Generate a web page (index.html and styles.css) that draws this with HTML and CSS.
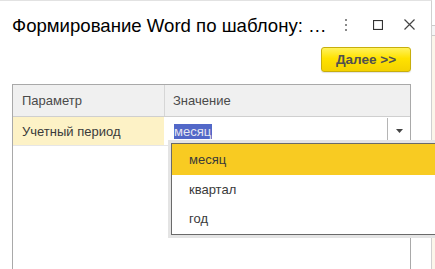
FILE: index.html
```html
<!DOCTYPE html>
<html>
<head>
<meta charset="utf-8">
<link rel="stylesheet" href="styles.css">
</head>
<body>
<div class="screen">
  <div class="window">
    <div class="titlebar">
      <div class="title">Формирование Word по шаблону: …</div>
      <div class="controls">
        <svg class="ic-more" width="4" height="12" viewBox="0 0 4 12"><rect x="1" y="0" width="2" height="2" fill="#8a8a8a"/><rect x="1" y="5" width="2" height="2" fill="#8a8a8a"/><rect x="1" y="10" width="2" height="2" fill="#8a8a8a"/></svg>
        <svg class="ic-max" width="10" height="10" viewBox="0 0 10 10"><rect x="0.5" y="0.5" width="9" height="9" fill="none" stroke="#333" stroke-width="1.2"/></svg>
        <svg class="ic-close" width="11" height="11" viewBox="0 0 11 11"><path d="M0.5 0.5 L10.5 10.5 M10.5 0.5 L0.5 10.5" stroke="#444" stroke-width="1.2"/></svg>
      </div>
    </div>
    <div class="toolbar">
      <button class="btn-next">Далее &gt;&gt;</button>
    </div>
    <div class="grid">
      <div class="row head">
        <div class="cell c1">Параметр</div>
        <div class="cell c2">Значение</div>
      </div>
      <div class="row data">
        <div class="cell c1 param">Учетный период</div>
        <div class="cell c2 value">
          <span class="sel">месяц</span>
          <span class="dd-btn"><svg width="7" height="4" viewBox="0 0 7 4"><path d="M0 0 H7 L3.5 4 Z" fill="#444"/></svg></span>
        </div>
      </div>
      <div class="rest"></div>
    </div>
  </div>
  <div class="outside"></div>
  <div class="popup">
    <div class="item active">месяц</div>
    <div class="item">квартал</div>
    <div class="item">год</div>
  </div>
</div>
</body>
</html>
```

FILE: styles.css
```css
html, body {
  margin: 0;
  padding: 0;
  background: #fff;
}
.screen {
  position: relative;
  width: 435px;
  height: 269px;
  overflow: hidden;
  display: flex;
  font-family: Arial, "Liberation Sans", sans-serif;
}
.window {
  width: 432px;
  height: 269px;
  box-sizing: border-box;
  border-top: 1px solid #e2e2e2;
  border-right: 1px solid #d0d0d0;
  display: flex;
  flex-direction: column;
  padding: 0 20px 0 12px;
}
.outside {
  flex: 1;
  background: linear-gradient(#fff 0, #fff 25px, #ccc 25px, #ccc 26px, #f6f6f6 26px, #f6f6f6 35px, #ccc 35px, #ccc 36px, #fbf6ea 36px);
}
.titlebar {
  height: 44px;
  display: flex;
  align-items: center;
}
.title {
  flex: 1;
  font-size: 18.6px;
  color: #000;
  white-space: nowrap;
  padding-top: 5px;
}
.controls {
  display: flex;
  align-items: center;
  margin-right: -4px;
  padding-top: 3px;
}
.ic-more { margin-right: 25px; }
.ic-max { margin-right: 21px; }
.toolbar {
  display: flex;
  justify-content: flex-end;
  height: 27px;
  padding-top: 2px;
}
.btn-next {
  width: 90px;
  height: 25px;
  border: 1px solid #c7ae0c;
  border-radius: 3px;
  background: linear-gradient(#fff25c 0%, #ffe200 45%, #f4d200 100%);
  font-family: Arial, "Liberation Sans", sans-serif;
  font-weight: bold;
  font-size: 13.5px;
  color: #505050;
  padding: 0;
  box-shadow: 0 1px 1px rgba(0,0,0,0.12);
}
.grid {
  margin-top: 10px;
  flex: 1;
  display: flex;
  flex-direction: column;
  border: 1px solid #a9a9a9;
  border-bottom: none;
}
.row {
  display: flex;
}
.cell {
  font-size: 13px;
  color: #4a4a4a;
  box-sizing: border-box;
  display: flex;
  align-items: center;
}
.head {
  height: 31px;
  background: #f0f0f0;
  border-bottom: 1px solid #cfcfcf;
}
.head .c1 {
  width: 152px;
  padding-left: 9px;
  border-right: 1px solid #d6d6d6;
}
.head .c2 {
  flex: 1;
  padding-left: 8px;
}
.data {
  height: 28px;
  border-bottom: 1px solid #e6e6e6;
}
.param {
  width: 151px;
  background: #fdf2c6;
  padding-left: 9px;
  margin-right: 1px;
  color: #3a3a3a;
}
.value {
  flex: 1;
  padding-left: 9px;
  position: relative;
}
.sel {
  background: #5268c8;
  color: #e6e6f0;
  line-height: 15px;
  padding: 0 1px 0 0;
}
.dd-btn {
  position: absolute;
  right: 0;
  top: 1px;
  bottom: 1px;
  width: 22px;
  border-left: 1px solid #b5b5b5;
  display: flex;
  align-items: center;
  justify-content: center;
}
.rest {
  flex: 1;
}
.popup {
  position: absolute;
  left: 171px;
  top: 143px;
  width: 280px;
  box-sizing: border-box;
  border: 1px solid #6a6a6a;
  background: #fff;
  box-shadow: 0 0 0 3px #e4e4e4;
  padding-bottom: 1px;
}
.item {
  height: 29px;
  line-height: 29px;
  padding-left: 17px;
  font-size: 13px;
  color: #3a3a3a;
}
.item.active {
  height: 31px;
  line-height: 31px;
  background: #f8cb22;
}
```
